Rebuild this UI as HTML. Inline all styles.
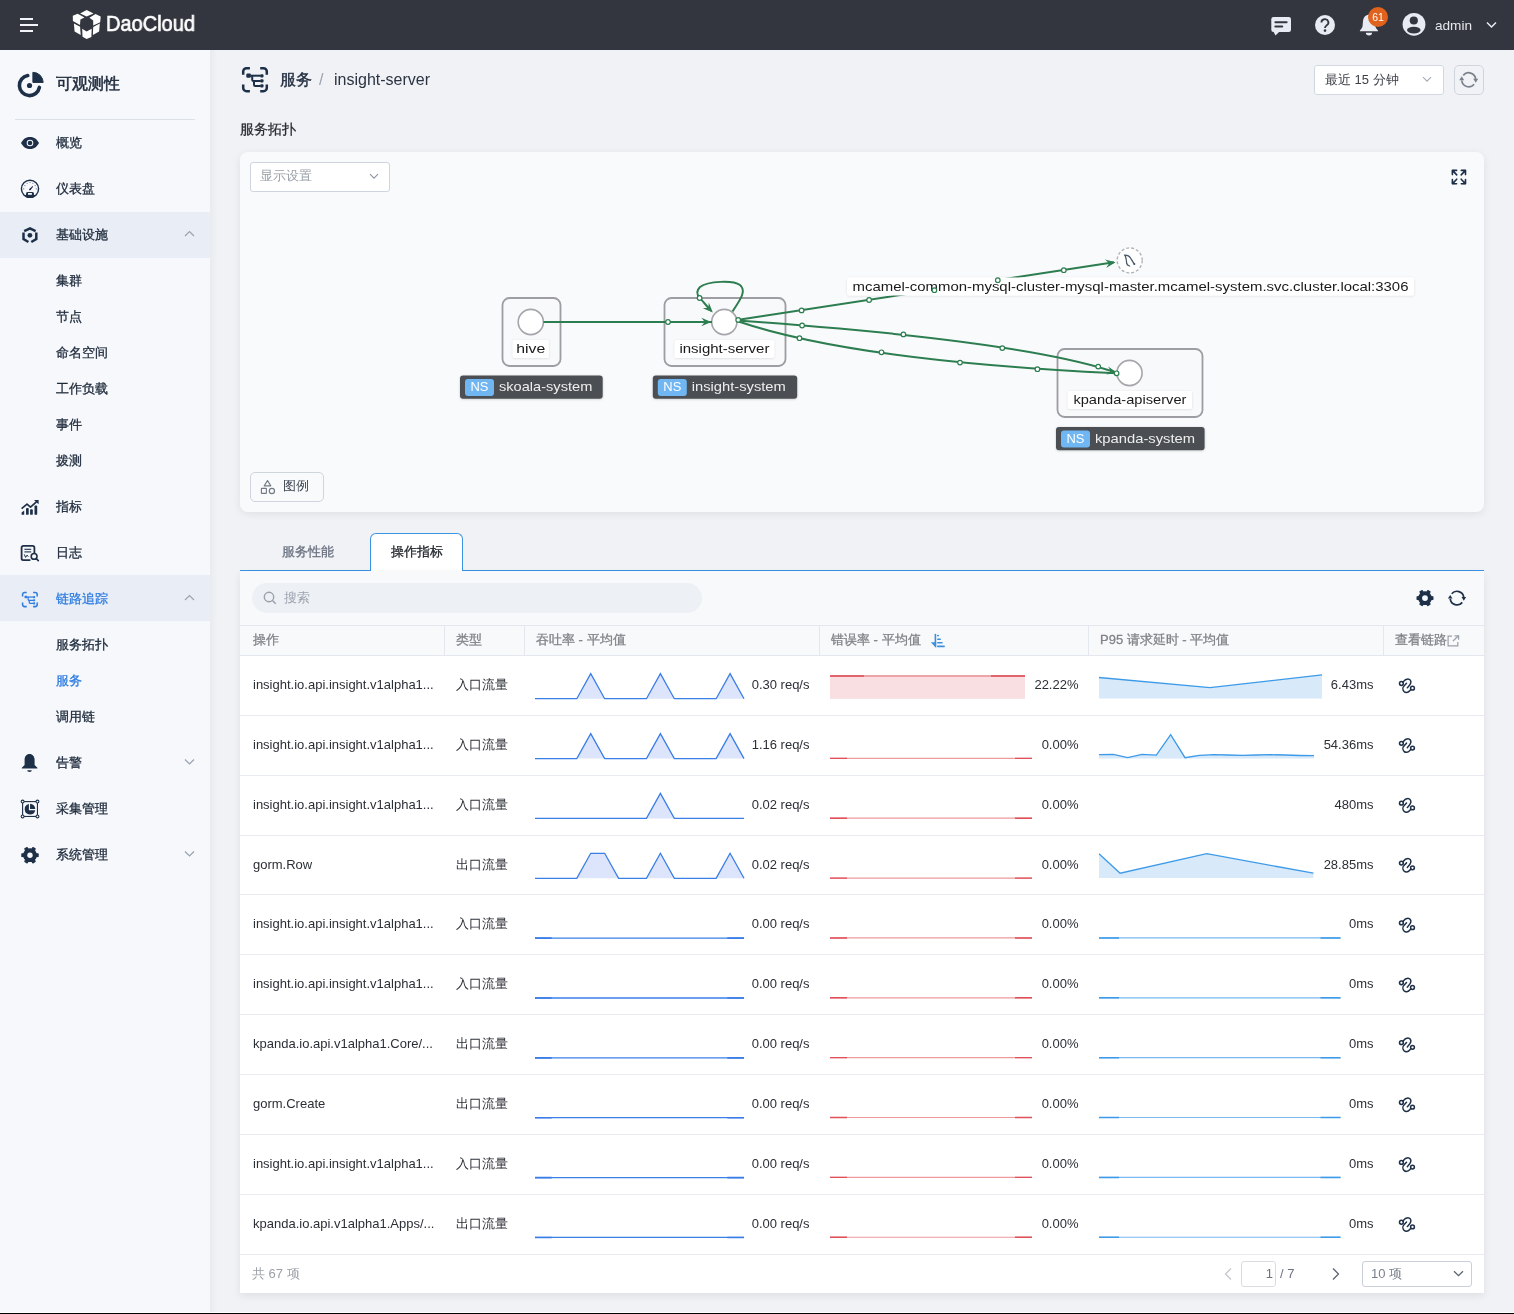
<!DOCTYPE html><html><head><meta charset="utf-8"><style>
*{box-sizing:border-box;margin:0;padding:0}
html,body{width:1514px;height:1314px;overflow:hidden}
body{font-family:"Liberation Sans",sans-serif;background:#f1f2f6;position:relative;color:#1f2937}
.a{position:absolute}
svg{position:absolute;overflow:visible;will-change:transform}
.t{position:absolute;white-space:nowrap;will-change:transform}
#hdr{left:0;top:0;width:1514px;height:50px;background:#33363f}
#side{left:0;top:50px;width:210px;height:1262px;background:#f6f8fc}
#sideshadow{left:210px;top:50px;width:8px;height:1262px;background:linear-gradient(to right,rgba(0,0,0,.03),rgba(0,0,0,0))}
.nav{font-size:13px;color:#1e2a3b;line-height:20px;-webkit-text-stroke:0.3px currentColor}
.med{-webkit-text-stroke:0.3px currentColor}
.hl{position:absolute;left:0;width:210px;height:46px;background:#e9eef6}
.blue{color:#2f7de1}
.card{position:absolute;background:#f9fafc;border-radius:8px;box-shadow:0 2px 9px rgba(0,0,0,.08)}
.row{position:absolute;left:240px;width:1244px;background:#fff;border-bottom:1px solid #e6e9ef}
.op{font-size:13px;color:#2b2f36}
</style></head><body>
<div id="hdr" class="a"></div>
<svg style="left:0;top:0" width="60" height="50"><g stroke="#f2f4f7" stroke-width="2"><line x1="20" y1="19" x2="33" y2="19"/><line x1="20" y1="25" x2="38" y2="25"/><line x1="20" y1="31" x2="33" y2="31"/></g></svg>
<svg style="left:0;top:0" width="110" height="50"><g fill="#fff"><polygon points="86.6,10 93.5,13.5 86.6,16.6 80.1,13.4"/><polygon points="72.8,15.8 77.7,13.8 84.5,17.4 80.4,19.6 80,25.1 72.9,21"/><polygon points="89.4,17.7 95.5,14.1 100.7,16.4 100.2,22.2 93.2,25.4 93.2,20.5"/><polygon points="73.9,23.6 80.1,26.8 80.7,34.9 74.6,31.4"/><polygon points="93.2,27.1 99.8,23.4 99.1,31.4 92.9,34.9"/><polygon points="82.2,28.8 86.6,31.4 91.7,28.8 91.4,37 86.6,39.1 82.5,36.8"/></g></svg>
<div class="t" style="left:105.9px;top:9.4px;font-size:21.5px;color:#fff;line-height:30px;transform-origin:0 0;transform:scaleX(0.93);-webkit-text-stroke:0.65px #fff">DaoCloud</div>
<svg style="left:0;top:0" width="1514" height="50"><rect x="1271.3" y="17" width="19.7" height="15" rx="2.2" fill="#e8ebf2"/><path d="M1273.4 31.5H1279.6L1275.5 35.6z" fill="#e8ebf2"/><g stroke="#33363f" stroke-width="2.1" stroke-linecap="round"><line x1="1275.4" y1="22.2" x2="1286.6" y2="22.2"/><line x1="1275.4" y1="26.5" x2="1282.2" y2="26.5"/></g></svg>
<svg style="left:1315px;top:15px" width="20" height="20" viewBox="0 0 20 20"><circle cx="10" cy="10" r="10" fill="#e8ebf2"/><path d="M6.4 7.5a3.5 3.3 0 1 1 5.2 2.9c-1 .6-1.6 1.1-1.6 2.6" stroke="#33363f" stroke-width="1.8" fill="none"/><circle cx="10" cy="15.6" r="1.3" fill="#33363f"/></svg>
<svg style="left:0;top:0" width="1514" height="50"><path d="M1359.8 31.3Q1359.8 30.3 1361 29.2Q1362.3 28 1362.6 26L1363 21Q1363.5 15 1369 14.4Q1374.5 15 1375 21L1375.3 26Q1375.6 28 1376.9 29.2Q1378.1 30.3 1378.1 31.3Z" fill="#e8ebf2"/><path d="M1365.8 32.8H1372.1Q1372 35.5 1369 35.5Q1366 35.5 1365.8 32.8Z" fill="#e8ebf2"/></svg>
<div class="a" style="left:1368px;top:6.5px;width:20px;height:20px;border-radius:10px;background:#e0621c"></div>
<div class="t" style="left:1368.2px;top:7px;width:20px;text-align:center;font-size:10.5px;line-height:20px;color:#fff">61</div>
<svg style="left:0;top:0" width="1514" height="50"><circle cx="1414" cy="24.3" r="11.4" fill="#e8ebf2"/><circle cx="1413.8" cy="20.5" r="4.1" fill="#33363f"/><ellipse cx="1413.8" cy="30.1" rx="6.8" ry="3.3" fill="#33363f"/></svg>
<div class="t" style="left:1434.5px;top:15.5px;font-size:13.6px;line-height:20px;color:#e5e7eb">admin</div>
<svg style="left:1486px;top:21px" width="11" height="8"><path d="M1 1.5l4.5 4.5l4.5-4.5" stroke="#e8ebf2" stroke-width="1.5" fill="none"/></svg>
<div id="side" class="a"></div><div id="sideshadow" class="a"></div>
<div class="a" style="left:15px;top:119px;width:180px;height:1px;background:#dde1e8"></div>
<svg style="left:0;top:0" width="210" height="120"><path d="M27.75 75.55A10.1 10.1 0 1 0 39.41 87.43" fill="none" stroke="#1e3048" stroke-width="3.6" stroke-linecap="round"/><path d="M32.9 82.4V72.3A10.4 10.4 0 0 1 43.2 82.4Z" fill="#1e3048" stroke="#1e3048" stroke-width="1" stroke-linejoin="round"/><circle cx="29.5" cy="85.5" r="2.6" fill="#1e3048"/></svg>
<div class="t" style="left:56px;top:73px;font-size:16px;color:#1e2a3b;line-height:22px;-webkit-text-stroke:0.5px #1e2a3b">可观测性</div>
<div class="hl" style="top:212px"></div>
<div class="hl" style="top:575px"></div>
<div class="t nav" style="left:56px;top:133px">概览</div>
<div class="t nav" style="left:56px;top:179px">仪表盘</div>
<div class="t nav" style="left:56px;top:225px">基础设施</div>
<div class="t nav" style="left:56px;top:497px">指标</div>
<div class="t nav" style="left:56px;top:543px">日志</div>
<div class="t nav blue" style="left:56px;top:589px">链路追踪</div>
<div class="t nav" style="left:56px;top:753px">告警</div>
<div class="t nav" style="left:56px;top:799px">采集管理</div>
<div class="t nav" style="left:56px;top:845px">系统管理</div>
<div class="t nav" style="left:56px;top:271px">集群</div>
<div class="t nav" style="left:56px;top:307px">节点</div>
<div class="t nav" style="left:56px;top:343px">命名空间</div>
<div class="t nav" style="left:56px;top:379px">工作负载</div>
<div class="t nav" style="left:56px;top:415px">事件</div>
<div class="t nav" style="left:56px;top:451px">拨测</div>
<div class="t nav" style="left:56px;top:635px">服务拓扑</div>
<div class="t nav blue" style="left:56px;top:671px">服务</div>
<div class="t nav" style="left:56px;top:707px">调用链</div>
<svg style="left:184px;top:230px" width="11" height="8"><path d="M1 6l4.5-4.5l4.5 4.5" stroke="#9aa3b0" stroke-width="1.2" fill="none"/></svg>
<svg style="left:184px;top:594px" width="11" height="8"><path d="M1 6l4.5-4.5l4.5 4.5" stroke="#9aa3b0" stroke-width="1.2" fill="none"/></svg>
<svg style="left:184px;top:758px" width="11" height="8"><path d="M1 1.5l4.5 4.5l4.5-4.5" stroke="#9aa3b0" stroke-width="1.2" fill="none"/></svg>
<svg style="left:184px;top:850px" width="11" height="8"><path d="M1 1.5l4.5 4.5l4.5-4.5" stroke="#9aa3b0" stroke-width="1.2" fill="none"/></svg>
<svg style="left:20px;top:136px" width="20" height="14" viewBox="0 0 20 14"><path d="M1 7C3.5 2.5 6.5 1 10 1s6.5 1.5 9 6c-2.5 4.5-5.5 6-9 6S3.5 11.5 1 7z" fill="#1e3048"/><circle cx="10" cy="7" r="3.3" fill="#f6f8fc"/><circle cx="10" cy="7" r="2.3" fill="#1e3048"/></svg>
<svg style="left:0;top:0" width="210" height="210"><circle cx="30" cy="188.8" r="8.6" fill="none" stroke="#1e3048" stroke-width="1.4"/><path d="M23.3 195A9 9 0 0 0 36.7 195Z" fill="#1e3048"/><path d="M26 195.2V193.6a1.6 1.6 0 0 1 1.6-1.6h4.8a1.6 1.6 0 0 1 1.6 1.6V195.2z" fill="#1e3048"/><rect x="28" y="193" width="3.9" height="1.8" fill="#f6f8fc"/><path d="M29.6 189.8L32.8 186.3" stroke="#1e3048" stroke-width="1.1"/><path d="M29 189.6l1.8-1.8l0.9 0.9l-1.8 1.8z" fill="#1e3048"/><g fill="#1e3048" opacity="0.7"><circle cx="23.7" cy="188.8" r=".6"/><circle cx="36.3" cy="188.8" r=".6"/><circle cx="24.9" cy="185.6" r=".55"/><circle cx="35.1" cy="185.6" r=".55"/><circle cx="27.1" cy="183.3" r=".55"/><circle cx="32.9" cy="183.3" r=".55"/><circle cx="30" cy="182.5" r=".55"/></g></svg>
<svg style="left:0;top:0" width="210" height="260"><g fill="none" stroke="#1e3048" stroke-width="2.5"><path d="M24.2 231.2L30 228.4L35.6 231.2"/><path d="M23.5 232.6V239L28.4 242"/><path d="M36.3 232.6V239L31.3 242"/></g><circle cx="29.9" cy="235.3" r="2.4" fill="#1e3048"/></svg>
<svg style="left:0;top:0" width="210" height="600"><g fill="#1e3048"><path d="M21.6 514.8V512.6l2.6-2.2V514.8z"/><rect x="26" y="508" width="2.7" height="6.8" rx=".9"/><rect x="30.1" y="509.3" width="2.7" height="5.5" rx=".9"/><rect x="34.5" y="505.6" width="2.7" height="9.2" rx=".9"/></g><path d="M21.6 508.6L27 504.2L30.5 507.2L37 501.4" stroke="#1e3048" stroke-width="1.7" fill="none" stroke-linejoin="round"/><path d="M34 499.9H38.6V504.3z" fill="#1e3048"/></svg>
<svg style="left:0;top:0" width="210" height="600"><path d="M30.4 560.2H23.2a1.6 1.6 0 0 1-1.6-1.6V547.4a1.6 1.6 0 0 1 1.6-1.6h9.6a1.6 1.6 0 0 1 1.6 1.6V553.4" fill="none" stroke="#1e3048" stroke-width="1.8"/><g stroke="#1e3048" stroke-width="1.1"><line x1="24.4" y1="549.3" x2="31.2" y2="549.3"/><line x1="24.4" y1="551.9" x2="31.2" y2="551.9"/></g><path d="M24.3 554.4l1.3 3l1.5-2.3l1.2 1.6" stroke="#1e3048" stroke-width="1" fill="none"/><circle cx="34.1" cy="556.4" r="2.9" fill="none" stroke="#1e3048" stroke-width="1.6"/><line x1="36.2" y1="558.5" x2="38.3" y2="560.6" stroke="#1e3048" stroke-width="1.7" stroke-linecap="round"/></svg>
<svg style="left:0;top:0" width="1514" height="1314"><g transform="translate(21.9,591.1) scale(0.6192)"><g fill="none" stroke="#2f7de1" stroke-width="2.5"><path d="M1.1 8.6V5.4a3.3 3.3 0 0 1 3.3-3.3H7.8"/><path d="M18.1 2.1H21.4a3.3 3.3 0 0 1 3.3 3.3V8.6"/><path d="M1.1 18.4V21.8a3.3 3.3 0 0 0 3.3 3.3H7.8"/><path d="M24.7 18.4V21.8a3.3 3.3 0 0 1-3.3 3.3H18.1"/></g><g fill="#2f7de1"><rect x="4.2" y="7.5" width="4.6" height="4.2" rx="1.2"/><rect x="18.1" y="8.1" width="3.3" height="3.3" rx="1"/><rect x="18.1" y="13.1" width="3.3" height="3.4" rx="1"/><rect x="18.1" y="18.2" width="3.3" height="3.3" rx="1"/></g><g fill="none" stroke="#2f7de1" stroke-width="2"><path d="M8.6 9.6H18.5"/><path d="M10.1 9.6V13.6a1.2 1.2 0 0 0 1.2 1.2H18.5"/><path d="M11.9 14.8V18.6a1.2 1.2 0 0 0 1.2 1.2H18.5"/></g></g></svg>
<svg style="left:21px;top:753px" width="18" height="20" viewBox="0 0 18 20"><path d="M8.5 1C5.4 1 3.6 3.5 3.6 6.6v5.3L0.8 14.8v.8h15.6v-.8l-2.8-2.9V6.6C13.6 3.5 11.6 1 8.5 1z" fill="#1e3048"/><path d="M6.2 17.2a2.3 1.8 0 0 0 4.6 0z" fill="#1e3048"/></svg>
<svg style="left:0;top:0" width="210" height="900"><rect x="22.6" y="801.6" width="14.85" height="14.85" fill="none" stroke="#1e3048" stroke-width="1.1"/><g fill="#f6f8fc" stroke="#1e3048" stroke-width="1.1"><circle cx="22.6" cy="801.6" r="1.45"/><circle cx="37.45" cy="801.6" r="1.45"/><circle cx="22.6" cy="816.45" r="1.45"/><circle cx="37.45" cy="816.45" r="1.45"/></g><path d="M28.9 804.02A5.3 5.3 0 1 0 35.2 810.2H28.9Z" fill="#1e3048"/><path d="M30.05 808.9V803.7A5.2 5.2 0 0 1 35.25 808.9Z" fill="#1e3048"/></svg>
<svg style="left:0;top:0" width="1514" height="1314"><polygon points="35.46,852.05 36.11,853.68 38.10,853.92 38.10,856.48 36.11,856.72 35.46,858.35 34.38,859.73 35.16,861.57 32.94,862.86 31.74,861.26 30.00,861.50 28.26,861.26 27.06,862.86 24.84,861.57 25.62,859.73 24.54,858.35 23.89,856.72 21.90,856.48 21.90,853.92 23.89,853.68 24.54,852.05 25.62,850.67 24.84,848.83 27.06,847.54 28.26,849.14 30.00,848.90 31.74,849.14 32.94,847.54 35.16,848.83 34.38,850.67" fill="#1e3048" stroke="#1e3048" stroke-width="1.2" stroke-linejoin="round"/><circle cx="30" cy="855.2" r="2.7" fill="#f6f8fc"/></svg>
<svg style="left:0;top:0" width="1514" height="1314"><g transform="translate(242.1,66.1) scale(1.0000)"><g fill="none" stroke="#1e3048" stroke-width="2.5"><path d="M1.1 8.6V5.4a3.3 3.3 0 0 1 3.3-3.3H7.8"/><path d="M18.1 2.1H21.4a3.3 3.3 0 0 1 3.3 3.3V8.6"/><path d="M1.1 18.4V21.8a3.3 3.3 0 0 0 3.3 3.3H7.8"/><path d="M24.7 18.4V21.8a3.3 3.3 0 0 1-3.3 3.3H18.1"/></g><g fill="#1e3048"><rect x="4.2" y="7.5" width="4.6" height="4.2" rx="1.2"/><rect x="18.1" y="8.1" width="3.3" height="3.3" rx="1"/><rect x="18.1" y="13.1" width="3.3" height="3.4" rx="1"/><rect x="18.1" y="18.2" width="3.3" height="3.3" rx="1"/></g><g fill="none" stroke="#1e3048" stroke-width="2"><path d="M8.6 9.6H18.5"/><path d="M10.1 9.6V13.6a1.2 1.2 0 0 0 1.2 1.2H18.5"/><path d="M11.9 14.8V18.6a1.2 1.2 0 0 0 1.2 1.2H18.5"/></g></g></svg>
<div class="t" style="left:280px;top:69px;font-size:16px;color:#1e2a3b;line-height:22px;-webkit-text-stroke:0.35px #1e2a3b">服务</div>
<div class="t" style="left:319px;top:69px;font-size:16px;color:#9ca3af;line-height:22px">/</div>
<div class="t" style="left:334px;top:69px;font-size:16px;color:#2a3443;line-height:22px">insight-server</div>
<div class="a" style="left:1314px;top:65px;width:130px;height:30px;background:#fff;border:1px solid #d3d8e0;border-radius:3px"></div>
<div class="t" style="left:1325px;top:70px;font-size:13px;color:#3b3f46;line-height:20px">最近 15 分钟</div>
<svg style="left:1422px;top:76px" width="10" height="7"><path d="M1 1.2l4 4l4-4" stroke="#a3aab5" stroke-width="1.1" fill="none"/></svg>
<div class="a" style="left:1454px;top:65px;width:30px;height:30px;border:1px solid #d0d5dd;border-radius:5px;background:#f0f2f5"></div>
<svg style="left:0;top:0" width="1514" height="1314"><g fill="none" stroke="#7b828d" stroke-width="1.7"><path d="M1463.26 75.39A7 7 0 0 1 1475.66 79.07"/><path d="M1474.14 84.21A7 7 0 0 1 1461.74 80.53"/></g><path d="M1473.20 78.80H1478.20L1475.70 82.80z" fill="#7b828d"/><path d="M1459.20 80.30H1464.20L1461.70 76.30z" fill="#7b828d"/></svg>
<div class="t" style="left:240px;top:119px;font-size:14px;color:#2b2f36;line-height:20px;-webkit-text-stroke:0.3px #2b2f36">服务拓扑</div>
<div class="card" style="left:240px;top:152px;width:1244px;height:360px"></div>
<div class="a" style="left:250px;top:162px;width:140px;height:30px;background:#fff;border:1px solid #cfd5de;border-radius:3px"></div>
<div class="t" style="left:260px;top:166px;font-size:13px;color:#9aa0a8;line-height:20px">显示设置</div>
<svg style="left:369px;top:173px" width="10" height="7"><path d="M1 1.2l4 4l4-4" stroke="#8d95a1" stroke-width="1.1" fill="none"/></svg>
<svg style="left:0;top:0" width="1514" height="300"><path d="M1452.4 174.6V170.4H1456.6000000000001" fill="none" stroke="#1e3048" stroke-width="1.6" stroke-linecap="round" stroke-linejoin="round"/><path d="M1452.4 170.4L1455.0 170.4L1452.4 173.0Z" fill="#1e3048" stroke="#1e3048" stroke-width="1" stroke-linejoin="round"/><path d="M1453.4 171.4L1456.7 174.9" stroke="#1e3048" stroke-width="1.6" stroke-linecap="round"/><path d="M1465.5 174.6V170.4H1461.3" fill="none" stroke="#1e3048" stroke-width="1.6" stroke-linecap="round" stroke-linejoin="round"/><path d="M1465.5 170.4L1462.9 170.4L1465.5 173.0Z" fill="#1e3048" stroke="#1e3048" stroke-width="1" stroke-linejoin="round"/><path d="M1464.5 171.4L1461.2 174.9" stroke="#1e3048" stroke-width="1.6" stroke-linecap="round"/><path d="M1452.4 179.5V183.7H1456.6000000000001" fill="none" stroke="#1e3048" stroke-width="1.6" stroke-linecap="round" stroke-linejoin="round"/><path d="M1452.4 183.7L1455.0 183.7L1452.4 181.1Z" fill="#1e3048" stroke="#1e3048" stroke-width="1" stroke-linejoin="round"/><path d="M1453.4 182.7L1456.7 179.2" stroke="#1e3048" stroke-width="1.6" stroke-linecap="round"/><path d="M1465.5 179.5V183.7H1461.3" fill="none" stroke="#1e3048" stroke-width="1.6" stroke-linecap="round" stroke-linejoin="round"/><path d="M1465.5 183.7L1462.9 183.7L1465.5 181.1Z" fill="#1e3048" stroke="#1e3048" stroke-width="1" stroke-linejoin="round"/><path d="M1464.5 182.7L1461.2 179.2" stroke="#1e3048" stroke-width="1.6" stroke-linecap="round"/></svg>
<div class="a" style="left:250px;top:472px;width:74px;height:30px;border:1px solid #cfd5de;border-radius:5px"></div>
<svg style="left:0;top:0" width="400" height="520"><g fill="none" stroke="#737a84" stroke-width="1.15"><path d="M267.5 480.6L270.8 485.8H264.2z" stroke-linejoin="round"/><rect x="261.4" y="488.4" width="5" height="5" rx=".6"/><circle cx="271.9" cy="491" r="2.6"/></g></svg>
<div class="t" style="left:283px;top:476px;font-size:13px;color:#3b4350;line-height:20px">图例</div>
<svg style="left:0;top:0" width="1514" height="1314"><defs><filter id="sh" x="-10%" y="-50%" width="120%" height="200%"><feDropShadow dx="0" dy="0.5" stdDeviation="0.8" flood-color="#000" flood-opacity="0.12"/></filter><filter id="sh2" x="-10%" y="-50%" width="120%" height="200%"><feDropShadow dx="0" dy="0.5" stdDeviation="1" flood-color="#000" flood-opacity="0.2"/></filter></defs><rect x="502.5" y="298" width="58" height="68" rx="7" fill="#f8f9fa" stroke="#9d9da3" stroke-width="1.8"/><rect x="664.5" y="298" width="121" height="68" rx="7" fill="#f8f9fa" stroke="#9d9da3" stroke-width="1.8"/><rect x="1057.5" y="349" width="145" height="68" rx="7" fill="#f8f9fa" stroke="#9d9da3" stroke-width="1.8"/><circle cx="530.8" cy="322" r="12.6" fill="#fff" stroke="#a5a5ab" stroke-width="1.6"/><circle cx="724.3" cy="322" r="12.6" fill="#fff" stroke="#a5a5ab" stroke-width="1.6"/><circle cx="1129.5" cy="373" r="12.6" fill="#fff" stroke="#a5a5ab" stroke-width="1.6"/><circle cx="1129.7" cy="260.4" r="12.5" fill="#fff" stroke="#b0b3b8" stroke-width="1.4" stroke-dasharray="3 2"/><path d="M1124.5 255.2C1126.5 255 1129 255.5 1130.5 258C1132 260.5 1133 262.5 1134.5 264.2M1125.3 256C1126.2 258.5 1126.6 261 1126.7 263.5C1127 265 1128 265.5 1129.6 266" stroke="#4b5a6a" stroke-width="1.3" fill="none" stroke-linecap="round"/><circle cx="1134.3" cy="263.9" r="1" fill="#4b5a6a"/><path d="M543.4 322H712" stroke="#2c7d4f" stroke-width="2" fill="none"/><path d="M711.3 322.0L701.3 326.2L704.8 322.0L701.3 317.8z" fill="#2c7d4f"/><circle cx="668" cy="322" r="2.3" fill="#fff" stroke="#2c7d4f" stroke-width="1.2"/><path d="M732.5 311.5C740 300 747 291 740 285C733 280 708 281 700 287C696 291 697 295 700 298C704 303 707 306 711 311" stroke="#2c7d4f" stroke-width="2" fill="none"/><path d="M712.8 312.5L702.8 308.3L708.3 307.8L708.8 302.4z" fill="#2c7d4f"/><circle cx="699.6" cy="298" r="2.3" fill="#fff" stroke="#2c7d4f" stroke-width="1.2"/><path d="M737 320L1114 262.3" stroke="#2c7d4f" stroke-width="2" fill="none"/><path d="M1115.5 262.2L1106.2 267.9L1109.1 263.2L1105.0 259.6z" fill="#2c7d4f"/><rect x="847" y="277.6" width="567" height="18" rx="2" fill="#fff" filter="url(#sh)"/><text x="852.5" y="290.7" font-family="Liberation Sans" font-size="13.4" fill="#1a1a1a" textLength="556" lengthAdjust="spacingAndGlyphs">mcamel-common-mysql-cluster-mysql-master.mcamel-system.svc.cluster.local:3306</text><circle cx="801.6" cy="310.4" r="2.3" fill="#fff" stroke="#2c7d4f" stroke-width="1.2"/><circle cx="869.1" cy="300" r="2.3" fill="#fff" stroke="#2c7d4f" stroke-width="1.2"/><circle cx="934.4" cy="290.2" r="2.3" fill="#fff" stroke="#2c7d4f" stroke-width="1.2"/><circle cx="997.8" cy="280.2" r="2.3" fill="#fff" stroke="#2c7d4f" stroke-width="1.2"/><circle cx="1063.8" cy="270.2" r="2.3" fill="#fff" stroke="#2c7d4f" stroke-width="1.2"/><path d="M737 320.5Q1024 340.5 1117 372.8" stroke="#2c7d4f" stroke-width="2" fill="none"/><path d="M737 321Q854 361 1117 373.3" stroke="#2c7d4f" stroke-width="2" fill="none"/><path d="M1117.0 372.8L1106.3 374.6L1110.7 371.3L1108.2 366.4z" fill="#2c7d4f"/><circle cx="738.2" cy="319.9" r="2.3" fill="#fff" stroke="#2c7d4f" stroke-width="1.2"/><circle cx="802.1" cy="325.5" r="2.3" fill="#fff" stroke="#2c7d4f" stroke-width="1.2"/><circle cx="903.4" cy="334.4" r="2.3" fill="#fff" stroke="#2c7d4f" stroke-width="1.2"/><circle cx="1002.3" cy="348.1" r="2.3" fill="#fff" stroke="#2c7d4f" stroke-width="1.2"/><circle cx="1098.2" cy="366.6" r="2.3" fill="#fff" stroke="#2c7d4f" stroke-width="1.2"/><circle cx="799.5" cy="338.2" r="2.3" fill="#fff" stroke="#2c7d4f" stroke-width="1.2"/><circle cx="881.5" cy="352.3" r="2.3" fill="#fff" stroke="#2c7d4f" stroke-width="1.2"/><circle cx="960" cy="362.6" r="2.3" fill="#fff" stroke="#2c7d4f" stroke-width="1.2"/><circle cx="1037.4" cy="369.2" r="2.3" fill="#fff" stroke="#2c7d4f" stroke-width="1.2"/><circle cx="1116.6" cy="373.3" r="2.3" fill="#fff" stroke="#2c7d4f" stroke-width="1.2"/><rect x="512.7" y="340" width="36.2" height="18" rx="2" fill="#fff" filter="url(#sh)"/><text x="530.8000000000001" y="353.3" text-anchor="middle" font-family="Liberation Sans" font-size="13.4" fill="#1a1a1a" textLength="29" lengthAdjust="spacingAndGlyphs">hive</text><rect x="674.6" y="340" width="99.6" height="18" rx="2" fill="#fff" filter="url(#sh)"/><text x="724.4" y="353.3" text-anchor="middle" font-family="Liberation Sans" font-size="13.4" fill="#1a1a1a" textLength="90" lengthAdjust="spacingAndGlyphs">insight-server</text><rect x="1067.8" y="391" width="124.2" height="18" rx="2" fill="#fff" filter="url(#sh)"/><text x="1129.8999999999999" y="404.3" text-anchor="middle" font-family="Liberation Sans" font-size="13.4" fill="#1a1a1a" textLength="113" lengthAdjust="spacingAndGlyphs">kpanda-apiserver</text><rect x="460" y="375.5" width="142.7" height="23.3" rx="3" fill="#4b4f53" filter="url(#sh2)"/><rect x="465" y="378.9" width="29" height="17" rx="3" fill="#70b6f2"/><text x="479.5" y="391.4" text-anchor="middle" font-family="Liberation Sans" font-size="13.4" fill="#fff" textLength="18" lengthAdjust="spacingAndGlyphs">NS</text><text x="499" y="391.1" font-family="Liberation Sans" font-size="13.4" fill="#eeeeee" textLength="93.3" lengthAdjust="spacingAndGlyphs">skoala-system</text><rect x="652.8" y="375.5" width="144.4" height="23.3" rx="3" fill="#4b4f53" filter="url(#sh2)"/><rect x="657.8" y="378.9" width="29" height="17" rx="3" fill="#70b6f2"/><text x="672.3" y="391.4" text-anchor="middle" font-family="Liberation Sans" font-size="13.4" fill="#fff" textLength="18" lengthAdjust="spacingAndGlyphs">NS</text><text x="691.8" y="391.1" font-family="Liberation Sans" font-size="13.4" fill="#eeeeee" textLength="94" lengthAdjust="spacingAndGlyphs">insight-system</text><rect x="1056" y="427" width="148.6" height="23.3" rx="3" fill="#4b4f53" filter="url(#sh2)"/><rect x="1061" y="430.4" width="29" height="17" rx="3" fill="#70b6f2"/><text x="1075.5" y="442.9" text-anchor="middle" font-family="Liberation Sans" font-size="13.4" fill="#fff" textLength="18" lengthAdjust="spacingAndGlyphs">NS</text><text x="1095" y="442.6" font-family="Liberation Sans" font-size="13.4" fill="#eeeeee" textLength="100" lengthAdjust="spacingAndGlyphs">kpanda-system</text></svg>
<div class="a" style="left:240px;top:570px;width:1244px;height:1px;background:#3b93e4"></div>
<div class="a" style="left:369.5px;top:533px;width:93px;height:38px;background:#fff;border:1px solid #3b93e4;border-bottom:none;border-radius:6px 6px 0 0"></div>
<div class="t" style="left:281.5px;top:542px;font-size:13px;color:#6b7280;line-height:20px;-webkit-text-stroke:0.3px #6b7280">服务性能</div>
<div class="t" style="left:390.5px;top:542px;font-size:13px;color:#1f2328;line-height:20px;-webkit-text-stroke:0.3px #1f2328">操作指标</div>
<div class="a" style="left:240px;top:571px;width:1244px;height:722px;background:#fff;box-shadow:0 3px 8px rgba(0,0,0,.08)"></div>
<div class="a" style="left:240px;top:571px;width:1244px;height:84px;background:#f8f9fb"></div>
<div class="a" style="left:252px;top:583px;width:450px;height:30px;border-radius:15px;background:#edf0f4"></div>
<svg style="left:263px;top:591px" width="14" height="14" viewBox="0 0 14 14"><circle cx="6" cy="6" r="4.7" fill="none" stroke="#9aa1ab" stroke-width="1.4"/><path d="M9.5 9.5l3.2 3.2" stroke="#9aa1ab" stroke-width="1.5"/></svg>
<div class="t" style="left:283.5px;top:588px;font-size:13px;color:#9ca3af;line-height:20px">搜索</div>
<svg style="left:0;top:0" width="1514" height="1314"><polygon points="1430.37,595.00 1431.02,596.60 1432.90,596.85 1432.90,599.35 1431.02,599.60 1430.37,601.20 1429.31,602.56 1430.03,604.32 1427.87,605.57 1426.71,604.06 1425.00,604.30 1423.29,604.06 1422.13,605.57 1419.97,604.32 1420.69,602.56 1419.63,601.20 1418.98,599.60 1417.10,599.35 1417.10,596.85 1418.98,596.60 1419.63,595.00 1420.69,593.64 1419.97,591.88 1422.13,590.63 1423.29,592.14 1425.00,591.90 1426.71,592.14 1427.87,590.63 1430.03,591.88 1429.31,593.64" fill="#1e3048" stroke="#1e3048" stroke-width="1.2" stroke-linejoin="round"/><circle cx="1425" cy="598.1" r="2.9" fill="#f8f9fb"/></svg>
<svg style="left:0;top:0" width="1514" height="1314"><g fill="none" stroke="#1e3048" stroke-width="1.7"><path d="M1451.72 593.82A6.8 6.8 0 0 1 1463.76 597.39"/><path d="M1462.28 602.38A6.8 6.8 0 0 1 1450.24 598.81"/></g><path d="M1461.50 597.10H1466.10L1463.80 600.80z" fill="#1e3048"/><path d="M1447.90 598.60H1452.50L1450.20 594.90z" fill="#1e3048"/></svg>
<div class="a" style="left:240px;top:625px;width:1244px;height:1px;background:#e3e7ee"></div>
<div class="a" style="left:240px;top:655px;width:1244px;height:1px;background:#e3e7ee"></div>
<div class="a" style="left:444px;top:626px;width:1px;height:29px;background:#e3e7ee"></div>
<div class="a" style="left:524px;top:626px;width:1px;height:29px;background:#e3e7ee"></div>
<div class="a" style="left:819px;top:626px;width:1px;height:29px;background:#e3e7ee"></div>
<div class="a" style="left:1088px;top:626px;width:1px;height:29px;background:#e3e7ee"></div>
<div class="a" style="left:1383px;top:626px;width:1px;height:29px;background:#e3e7ee"></div>
<div class="t" style="left:252.5px;top:630px;font-size:13px;color:#808388;line-height:20px;-webkit-text-stroke:0.3px #808388">操作</div>
<div class="t" style="left:455.5px;top:630px;font-size:13px;color:#808388;line-height:20px;-webkit-text-stroke:0.3px #808388">类型</div>
<div class="t" style="left:535.5px;top:630px;font-size:13px;color:#808388;line-height:20px;-webkit-text-stroke:0.3px #808388">吞吐率 - 平均值</div>
<div class="t" style="left:830.5px;top:630px;font-size:13px;color:#808388;line-height:20px;-webkit-text-stroke:0.3px #808388">错误率 - 平均值</div>
<div class="t" style="left:1099.5px;top:630px;font-size:13px;color:#808388;line-height:20px;-webkit-text-stroke:0.3px #808388">P95 请求延时 - 平均值</div>
<div class="t" style="left:1394.5px;top:630px;font-size:13px;color:#808388;line-height:20px;-webkit-text-stroke:0.3px #808388">查看链路</div>
<svg style="left:0;top:0" width="1514" height="700"><g fill="#3a90de"><rect x="934.6" y="633.8" width="1.6" height="13" rx=".7"/><path d="M930.8 642.3H936.2V647.9z"/><rect x="937" y="634.8" width="2" height="1.6" rx=".8"/><rect x="937" y="638.5" width="4" height="1.6" rx=".8"/><rect x="937" y="641.9" width="5.8" height="1.6" rx=".8"/><rect x="937" y="645.6" width="7.9" height="1.6" rx=".8"/></g></svg>
<svg style="left:1447px;top:635px" width="13" height="12" viewBox="0 0 13 12"><g fill="none" stroke="#9aa0a8" stroke-width="1.2"><path d="M5 1.2H1.1v9.7h9.7V7"/><path d="M6 6l5.5-5.2"/><path d="M7.6 0.8h4v4"/></g></svg>
<div class="a" style="left:240px;top:714.86px;width:1244px;height:1px;background:#e8ebf0"></div>
<div class="t op" style="left:252.5px;top:675.00px;line-height:20px">insight.io.api.insight.v1alpha1...</div>
<div class="t op" style="left:455.5px;top:675.00px;line-height:20px">入口流量</div>
<div class="t op" style="left:700px;width:109.5px;text-align:right;top:675.00px;line-height:20px">0.30 req/s</div>
<div class="t op" style="left:980px;width:98.5px;text-align:right;top:675.00px;line-height:20px">22.22%</div>
<div class="t op" style="left:1270px;width:103.5px;text-align:right;top:675.00px;line-height:20px">6.43ms</div>
<div class="a" style="left:240px;top:774.72px;width:1244px;height:1px;background:#e8ebf0"></div>
<div class="t op" style="left:252.5px;top:734.86px;line-height:20px">insight.io.api.insight.v1alpha1...</div>
<div class="t op" style="left:455.5px;top:734.86px;line-height:20px">入口流量</div>
<div class="t op" style="left:700px;width:109.5px;text-align:right;top:734.86px;line-height:20px">1.16 req/s</div>
<div class="t op" style="left:980px;width:98.5px;text-align:right;top:734.86px;line-height:20px">0.00%</div>
<div class="t op" style="left:1270px;width:103.5px;text-align:right;top:734.86px;line-height:20px">54.36ms</div>
<div class="a" style="left:240px;top:834.58px;width:1244px;height:1px;background:#e8ebf0"></div>
<div class="t op" style="left:252.5px;top:794.72px;line-height:20px">insight.io.api.insight.v1alpha1...</div>
<div class="t op" style="left:455.5px;top:794.72px;line-height:20px">入口流量</div>
<div class="t op" style="left:700px;width:109.5px;text-align:right;top:794.72px;line-height:20px">0.02 req/s</div>
<div class="t op" style="left:980px;width:98.5px;text-align:right;top:794.72px;line-height:20px">0.00%</div>
<div class="t op" style="left:1270px;width:103.5px;text-align:right;top:794.72px;line-height:20px">480ms</div>
<div class="a" style="left:240px;top:894.44px;width:1244px;height:1px;background:#e8ebf0"></div>
<div class="t op" style="left:252.5px;top:854.58px;line-height:20px">gorm.Row</div>
<div class="t op" style="left:455.5px;top:854.58px;line-height:20px">出口流量</div>
<div class="t op" style="left:700px;width:109.5px;text-align:right;top:854.58px;line-height:20px">0.02 req/s</div>
<div class="t op" style="left:980px;width:98.5px;text-align:right;top:854.58px;line-height:20px">0.00%</div>
<div class="t op" style="left:1270px;width:103.5px;text-align:right;top:854.58px;line-height:20px">28.85ms</div>
<div class="a" style="left:240px;top:954.30px;width:1244px;height:1px;background:#e8ebf0"></div>
<div class="t op" style="left:252.5px;top:914.44px;line-height:20px">insight.io.api.insight.v1alpha1...</div>
<div class="t op" style="left:455.5px;top:914.44px;line-height:20px">入口流量</div>
<div class="t op" style="left:700px;width:109.5px;text-align:right;top:914.44px;line-height:20px">0.00 req/s</div>
<div class="t op" style="left:980px;width:98.5px;text-align:right;top:914.44px;line-height:20px">0.00%</div>
<div class="t op" style="left:1270px;width:103.5px;text-align:right;top:914.44px;line-height:20px">0ms</div>
<div class="a" style="left:240px;top:1014.16px;width:1244px;height:1px;background:#e8ebf0"></div>
<div class="t op" style="left:252.5px;top:974.30px;line-height:20px">insight.io.api.insight.v1alpha1...</div>
<div class="t op" style="left:455.5px;top:974.30px;line-height:20px">入口流量</div>
<div class="t op" style="left:700px;width:109.5px;text-align:right;top:974.30px;line-height:20px">0.00 req/s</div>
<div class="t op" style="left:980px;width:98.5px;text-align:right;top:974.30px;line-height:20px">0.00%</div>
<div class="t op" style="left:1270px;width:103.5px;text-align:right;top:974.30px;line-height:20px">0ms</div>
<div class="a" style="left:240px;top:1074.02px;width:1244px;height:1px;background:#e8ebf0"></div>
<div class="t op" style="left:252.5px;top:1034.16px;line-height:20px">kpanda.io.api.v1alpha1.Core/...</div>
<div class="t op" style="left:455.5px;top:1034.16px;line-height:20px">出口流量</div>
<div class="t op" style="left:700px;width:109.5px;text-align:right;top:1034.16px;line-height:20px">0.00 req/s</div>
<div class="t op" style="left:980px;width:98.5px;text-align:right;top:1034.16px;line-height:20px">0.00%</div>
<div class="t op" style="left:1270px;width:103.5px;text-align:right;top:1034.16px;line-height:20px">0ms</div>
<div class="a" style="left:240px;top:1133.88px;width:1244px;height:1px;background:#e8ebf0"></div>
<div class="t op" style="left:252.5px;top:1094.02px;line-height:20px">gorm.Create</div>
<div class="t op" style="left:455.5px;top:1094.02px;line-height:20px">出口流量</div>
<div class="t op" style="left:700px;width:109.5px;text-align:right;top:1094.02px;line-height:20px">0.00 req/s</div>
<div class="t op" style="left:980px;width:98.5px;text-align:right;top:1094.02px;line-height:20px">0.00%</div>
<div class="t op" style="left:1270px;width:103.5px;text-align:right;top:1094.02px;line-height:20px">0ms</div>
<div class="a" style="left:240px;top:1193.74px;width:1244px;height:1px;background:#e8ebf0"></div>
<div class="t op" style="left:252.5px;top:1153.88px;line-height:20px">insight.io.api.insight.v1alpha1...</div>
<div class="t op" style="left:455.5px;top:1153.88px;line-height:20px">入口流量</div>
<div class="t op" style="left:700px;width:109.5px;text-align:right;top:1153.88px;line-height:20px">0.00 req/s</div>
<div class="t op" style="left:980px;width:98.5px;text-align:right;top:1153.88px;line-height:20px">0.00%</div>
<div class="t op" style="left:1270px;width:103.5px;text-align:right;top:1153.88px;line-height:20px">0ms</div>
<div class="a" style="left:240px;top:1253.60px;width:1244px;height:1px;background:#e8ebf0"></div>
<div class="t op" style="left:252.5px;top:1213.74px;line-height:20px">kpanda.io.api.v1alpha1.Apps/...</div>
<div class="t op" style="left:455.5px;top:1213.74px;line-height:20px">出口流量</div>
<div class="t op" style="left:700px;width:109.5px;text-align:right;top:1213.74px;line-height:20px">0.00 req/s</div>
<div class="t op" style="left:980px;width:98.5px;text-align:right;top:1213.74px;line-height:20px">0.00%</div>
<div class="t op" style="left:1270px;width:103.5px;text-align:right;top:1213.74px;line-height:20px">0ms</div>
<svg style="left:0;top:0" width="1514" height="1314"><polygon points="535,698.7 535.00,698.70 548.93,698.70 562.87,698.70 576.80,698.70 590.73,673.70 604.67,698.70 618.60,698.70 632.53,698.70 646.47,698.70 660.40,673.70 674.33,698.70 688.27,698.70 702.20,698.70 716.13,698.70 730.07,673.70 744.00,698.70 744,698.7" fill="#dce5fb"/><polyline points="535.00,698.70 548.93,698.70 562.87,698.70 576.80,698.70 590.73,673.70 604.67,698.70 618.60,698.70 632.53,698.70 646.47,698.70 660.40,673.70 674.33,698.70 688.27,698.70 702.20,698.70 716.13,698.70 730.07,673.70 744.00,698.70" fill="none" stroke="#3a7ee8" stroke-width="1.3"/><rect x="830" y="675.5" width="195" height="23.4" fill="#f9dfe1"/><path d="M830 676.0H1025" stroke="#ea8e92" stroke-width="1.6"/><path d="M830 676.0h34M991 676.0h34" stroke="#e05058" stroke-width="1.6"/><polygon points="1099,698.5 1099.00,677.50 1210.00,687.70 1322.00,674.90 1322,698.5" fill="#d8e9fa"/><polyline points="1099.00,677.50 1210.00,687.70 1322.00,674.90" fill="none" stroke="#3d9ae8" stroke-width="1.3"/><g transform="translate(1394,673.00)" fill="none" stroke="#1e3048" stroke-width="1.5" stroke-linecap="round"><path d="M8.9 9.1C10.5 7 12 5.9 13.9 5.9C16 5.9 17.2 7.8 16.8 9.8C16.5 11.5 14.5 13.5 13.3 14.8"/><path d="M12.5 10.3L10 13C8.5 14.5 8.6 17 10 18.5C11.5 20 14 19.8 15.5 18L16.6 16.8"/><circle cx="7.4" cy="10.5" r="1.9"/><circle cx="18.5" cy="15.2" r="1.9"/></g><polygon points="535,758.5600000000001 535.00,758.56 548.93,758.56 562.87,758.56 576.80,758.56 590.73,733.56 604.67,758.56 618.60,758.56 632.53,758.56 646.47,758.56 660.40,733.56 674.33,758.56 688.27,758.56 702.20,758.56 716.13,758.56 730.07,733.56 744.00,758.56 744,758.5600000000001" fill="#dce5fb"/><polyline points="535.00,758.56 548.93,758.56 562.87,758.56 576.80,758.56 590.73,733.56 604.67,758.56 618.60,758.56 632.53,758.56 646.47,758.56 660.40,733.56 674.33,758.56 688.27,758.56 702.20,758.56 716.13,758.56 730.07,733.56 744.00,758.56" fill="none" stroke="#3a7ee8" stroke-width="1.3"/><path d="M830 758.36H1032" stroke="#ef9a9e" stroke-width="1.2"/><path d="M830 758.36h17M1015 758.36h17" stroke="#e05058" stroke-width="1.4"/><polygon points="1099.0,758.46 1099.00,754.70 1113.33,754.30 1127.67,757.70 1142.00,754.30 1156.33,755.10 1170.67,734.70 1185.00,757.70 1199.33,755.30 1213.67,754.70 1228.00,755.00 1242.33,755.30 1256.67,755.00 1271.00,754.70 1285.33,755.00 1299.67,755.50 1314.00,755.70 1314.0,758.46" fill="#d8e9fa"/><polyline points="1099.00,754.70 1113.33,754.30 1127.67,757.70 1142.00,754.30 1156.33,755.10 1170.67,734.70 1185.00,757.70 1199.33,755.30 1213.67,754.70 1228.00,755.00 1242.33,755.30 1256.67,755.00 1271.00,754.70 1285.33,755.00 1299.67,755.50 1314.00,755.70" fill="none" stroke="#3d9ae8" stroke-width="1.3"/><g transform="translate(1394,732.86)" fill="none" stroke="#1e3048" stroke-width="1.5" stroke-linecap="round"><path d="M8.9 9.1C10.5 7 12 5.9 13.9 5.9C16 5.9 17.2 7.8 16.8 9.8C16.5 11.5 14.5 13.5 13.3 14.8"/><path d="M12.5 10.3L10 13C8.5 14.5 8.6 17 10 18.5C11.5 20 14 19.8 15.5 18L16.6 16.8"/><circle cx="7.4" cy="10.5" r="1.9"/><circle cx="18.5" cy="15.2" r="1.9"/></g><polygon points="535,818.4200000000001 535.00,818.42 548.93,818.42 562.87,818.42 576.80,818.42 590.73,818.42 604.67,818.42 618.60,818.42 632.53,818.42 646.47,818.42 660.40,793.42 674.33,818.42 688.27,818.42 702.20,818.42 716.13,818.42 730.07,818.42 744.00,818.42 744,818.4200000000001" fill="#dce5fb"/><polyline points="535.00,818.42 548.93,818.42 562.87,818.42 576.80,818.42 590.73,818.42 604.67,818.42 618.60,818.42 632.53,818.42 646.47,818.42 660.40,793.42 674.33,818.42 688.27,818.42 702.20,818.42 716.13,818.42 730.07,818.42 744.00,818.42" fill="none" stroke="#3a7ee8" stroke-width="1.3"/><path d="M830 818.22H1032" stroke="#ef9a9e" stroke-width="1.2"/><path d="M830 818.22h17M1015 818.22h17" stroke="#e05058" stroke-width="1.4"/><g transform="translate(1394,792.72)" fill="none" stroke="#1e3048" stroke-width="1.5" stroke-linecap="round"><path d="M8.9 9.1C10.5 7 12 5.9 13.9 5.9C16 5.9 17.2 7.8 16.8 9.8C16.5 11.5 14.5 13.5 13.3 14.8"/><path d="M12.5 10.3L10 13C8.5 14.5 8.6 17 10 18.5C11.5 20 14 19.8 15.5 18L16.6 16.8"/><circle cx="7.4" cy="10.5" r="1.9"/><circle cx="18.5" cy="15.2" r="1.9"/></g><polygon points="535,878.28 535.00,878.28 548.93,878.28 562.87,878.28 576.80,878.28 590.73,853.28 604.67,853.28 618.60,878.28 632.53,878.28 646.47,878.28 660.40,853.28 674.33,878.28 688.27,878.28 702.20,878.28 716.13,878.28 730.07,853.28 744.00,878.28 744,878.28" fill="#dce5fb"/><polyline points="535.00,878.28 548.93,878.28 562.87,878.28 576.80,878.28 590.73,853.28 604.67,853.28 618.60,878.28 632.53,878.28 646.47,878.28 660.40,853.28 674.33,878.28 688.27,878.28 702.20,878.28 716.13,878.28 730.07,853.28 744.00,878.28" fill="none" stroke="#3a7ee8" stroke-width="1.3"/><path d="M830 878.0799999999999H1032" stroke="#ef9a9e" stroke-width="1.2"/><path d="M830 878.0799999999999h17M1015 878.0799999999999h17" stroke="#e05058" stroke-width="1.4"/><polygon points="1099,878.0799999999999 1099.00,853.68 1120.10,873.18 1206.70,853.68 1313.40,873.18 1313.4,878.0799999999999" fill="#d8e9fa"/><polyline points="1099.00,853.68 1120.10,873.18 1206.70,853.68 1313.40,873.18" fill="none" stroke="#3d9ae8" stroke-width="1.3"/><g transform="translate(1394,852.58)" fill="none" stroke="#1e3048" stroke-width="1.5" stroke-linecap="round"><path d="M8.9 9.1C10.5 7 12 5.9 13.9 5.9C16 5.9 17.2 7.8 16.8 9.8C16.5 11.5 14.5 13.5 13.3 14.8"/><path d="M12.5 10.3L10 13C8.5 14.5 8.6 17 10 18.5C11.5 20 14 19.8 15.5 18L16.6 16.8"/><circle cx="7.4" cy="10.5" r="1.9"/><circle cx="18.5" cy="15.2" r="1.9"/></g><polyline points="535.00,938.14 548.93,938.14 562.87,938.14 576.80,938.14 590.73,938.14 604.67,938.14 618.60,938.14 632.53,938.14 646.47,938.14 660.40,938.14 674.33,938.14 688.27,938.14 702.20,938.14 716.13,938.14 730.07,938.14 744.00,938.14" fill="none" stroke="#3a7ee8" stroke-width="1.3"/><path d="M535 938.1400000000001h16.7M727.3 938.1400000000001h16.7" stroke="#3a7ee8" stroke-width="1.6"/><path d="M830 937.94H1032" stroke="#ef9a9e" stroke-width="1.2"/><path d="M830 937.94h17M1015 937.94h17" stroke="#e05058" stroke-width="1.4"/><path d="M1099 937.94H1340.5" stroke="#79b9ef" stroke-width="1.2"/><path d="M1099 937.94h20M1320.5 937.94h20" stroke="#3d9ae8" stroke-width="1.5"/><g transform="translate(1394,912.44)" fill="none" stroke="#1e3048" stroke-width="1.5" stroke-linecap="round"><path d="M8.9 9.1C10.5 7 12 5.9 13.9 5.9C16 5.9 17.2 7.8 16.8 9.8C16.5 11.5 14.5 13.5 13.3 14.8"/><path d="M12.5 10.3L10 13C8.5 14.5 8.6 17 10 18.5C11.5 20 14 19.8 15.5 18L16.6 16.8"/><circle cx="7.4" cy="10.5" r="1.9"/><circle cx="18.5" cy="15.2" r="1.9"/></g><polyline points="535.00,998.00 548.93,998.00 562.87,998.00 576.80,998.00 590.73,998.00 604.67,998.00 618.60,998.00 632.53,998.00 646.47,998.00 660.40,998.00 674.33,998.00 688.27,998.00 702.20,998.00 716.13,998.00 730.07,998.00 744.00,998.00" fill="none" stroke="#3a7ee8" stroke-width="1.3"/><path d="M535 998.0h16.7M727.3 998.0h16.7" stroke="#3a7ee8" stroke-width="1.6"/><path d="M830 997.8H1032" stroke="#ef9a9e" stroke-width="1.2"/><path d="M830 997.8h17M1015 997.8h17" stroke="#e05058" stroke-width="1.4"/><path d="M1099 997.8H1340.5" stroke="#79b9ef" stroke-width="1.2"/><path d="M1099 997.8h20M1320.5 997.8h20" stroke="#3d9ae8" stroke-width="1.5"/><g transform="translate(1394,972.30)" fill="none" stroke="#1e3048" stroke-width="1.5" stroke-linecap="round"><path d="M8.9 9.1C10.5 7 12 5.9 13.9 5.9C16 5.9 17.2 7.8 16.8 9.8C16.5 11.5 14.5 13.5 13.3 14.8"/><path d="M12.5 10.3L10 13C8.5 14.5 8.6 17 10 18.5C11.5 20 14 19.8 15.5 18L16.6 16.8"/><circle cx="7.4" cy="10.5" r="1.9"/><circle cx="18.5" cy="15.2" r="1.9"/></g><polyline points="535.00,1057.86 548.93,1057.86 562.87,1057.86 576.80,1057.86 590.73,1057.86 604.67,1057.86 618.60,1057.86 632.53,1057.86 646.47,1057.86 660.40,1057.86 674.33,1057.86 688.27,1057.86 702.20,1057.86 716.13,1057.86 730.07,1057.86 744.00,1057.86" fill="none" stroke="#3a7ee8" stroke-width="1.3"/><path d="M535 1057.86h16.7M727.3 1057.86h16.7" stroke="#3a7ee8" stroke-width="1.6"/><path d="M830 1057.6599999999999H1032" stroke="#ef9a9e" stroke-width="1.2"/><path d="M830 1057.6599999999999h17M1015 1057.6599999999999h17" stroke="#e05058" stroke-width="1.4"/><path d="M1099 1057.6599999999999H1340.5" stroke="#79b9ef" stroke-width="1.2"/><path d="M1099 1057.6599999999999h20M1320.5 1057.6599999999999h20" stroke="#3d9ae8" stroke-width="1.5"/><g transform="translate(1394,1032.16)" fill="none" stroke="#1e3048" stroke-width="1.5" stroke-linecap="round"><path d="M8.9 9.1C10.5 7 12 5.9 13.9 5.9C16 5.9 17.2 7.8 16.8 9.8C16.5 11.5 14.5 13.5 13.3 14.8"/><path d="M12.5 10.3L10 13C8.5 14.5 8.6 17 10 18.5C11.5 20 14 19.8 15.5 18L16.6 16.8"/><circle cx="7.4" cy="10.5" r="1.9"/><circle cx="18.5" cy="15.2" r="1.9"/></g><polyline points="535.00,1117.72 548.93,1117.72 562.87,1117.72 576.80,1117.72 590.73,1117.72 604.67,1117.72 618.60,1117.72 632.53,1117.72 646.47,1117.72 660.40,1117.72 674.33,1117.72 688.27,1117.72 702.20,1117.72 716.13,1117.72 730.07,1117.72 744.00,1117.72" fill="none" stroke="#3a7ee8" stroke-width="1.3"/><path d="M535 1117.72h16.7M727.3 1117.72h16.7" stroke="#3a7ee8" stroke-width="1.6"/><path d="M830 1117.52H1032" stroke="#ef9a9e" stroke-width="1.2"/><path d="M830 1117.52h17M1015 1117.52h17" stroke="#e05058" stroke-width="1.4"/><path d="M1099 1117.52H1340.5" stroke="#79b9ef" stroke-width="1.2"/><path d="M1099 1117.52h20M1320.5 1117.52h20" stroke="#3d9ae8" stroke-width="1.5"/><g transform="translate(1394,1092.02)" fill="none" stroke="#1e3048" stroke-width="1.5" stroke-linecap="round"><path d="M8.9 9.1C10.5 7 12 5.9 13.9 5.9C16 5.9 17.2 7.8 16.8 9.8C16.5 11.5 14.5 13.5 13.3 14.8"/><path d="M12.5 10.3L10 13C8.5 14.5 8.6 17 10 18.5C11.5 20 14 19.8 15.5 18L16.6 16.8"/><circle cx="7.4" cy="10.5" r="1.9"/><circle cx="18.5" cy="15.2" r="1.9"/></g><polyline points="535.00,1177.58 548.93,1177.58 562.87,1177.58 576.80,1177.58 590.73,1177.58 604.67,1177.58 618.60,1177.58 632.53,1177.58 646.47,1177.58 660.40,1177.58 674.33,1177.58 688.27,1177.58 702.20,1177.58 716.13,1177.58 730.07,1177.58 744.00,1177.58" fill="none" stroke="#3a7ee8" stroke-width="1.3"/><path d="M535 1177.5800000000002h16.7M727.3 1177.5800000000002h16.7" stroke="#3a7ee8" stroke-width="1.6"/><path d="M830 1177.38H1032" stroke="#ef9a9e" stroke-width="1.2"/><path d="M830 1177.38h17M1015 1177.38h17" stroke="#e05058" stroke-width="1.4"/><path d="M1099 1177.38H1340.5" stroke="#79b9ef" stroke-width="1.2"/><path d="M1099 1177.38h20M1320.5 1177.38h20" stroke="#3d9ae8" stroke-width="1.5"/><g transform="translate(1394,1151.88)" fill="none" stroke="#1e3048" stroke-width="1.5" stroke-linecap="round"><path d="M8.9 9.1C10.5 7 12 5.9 13.9 5.9C16 5.9 17.2 7.8 16.8 9.8C16.5 11.5 14.5 13.5 13.3 14.8"/><path d="M12.5 10.3L10 13C8.5 14.5 8.6 17 10 18.5C11.5 20 14 19.8 15.5 18L16.6 16.8"/><circle cx="7.4" cy="10.5" r="1.9"/><circle cx="18.5" cy="15.2" r="1.9"/></g><polyline points="535.00,1237.44 548.93,1237.44 562.87,1237.44 576.80,1237.44 590.73,1237.44 604.67,1237.44 618.60,1237.44 632.53,1237.44 646.47,1237.44 660.40,1237.44 674.33,1237.44 688.27,1237.44 702.20,1237.44 716.13,1237.44 730.07,1237.44 744.00,1237.44" fill="none" stroke="#3a7ee8" stroke-width="1.3"/><path d="M535 1237.44h16.7M727.3 1237.44h16.7" stroke="#3a7ee8" stroke-width="1.6"/><path d="M830 1237.24H1032" stroke="#ef9a9e" stroke-width="1.2"/><path d="M830 1237.24h17M1015 1237.24h17" stroke="#e05058" stroke-width="1.4"/><path d="M1099 1237.24H1340.5" stroke="#79b9ef" stroke-width="1.2"/><path d="M1099 1237.24h20M1320.5 1237.24h20" stroke="#3d9ae8" stroke-width="1.5"/><g transform="translate(1394,1211.74)" fill="none" stroke="#1e3048" stroke-width="1.5" stroke-linecap="round"><path d="M8.9 9.1C10.5 7 12 5.9 13.9 5.9C16 5.9 17.2 7.8 16.8 9.8C16.5 11.5 14.5 13.5 13.3 14.8"/><path d="M12.5 10.3L10 13C8.5 14.5 8.6 17 10 18.5C11.5 20 14 19.8 15.5 18L16.6 16.8"/><circle cx="7.4" cy="10.5" r="1.9"/><circle cx="18.5" cy="15.2" r="1.9"/></g></svg>
<div class="t" style="left:252px;top:1263.5px;font-size:13px;color:#9ba0a7;line-height:20px">共 67 项</div>
<svg style="left:1222px;top:1267px" width="12" height="14"><path d="M9 1.5l-5.5 5.5l5.5 5.5" stroke="#c4c8ce" stroke-width="1.3" fill="none"/></svg>
<div class="a" style="left:1241px;top:1261px;width:35px;height:26px;border:1px solid #d9dde3;border-radius:3px;background:#fff"></div>
<div class="t" style="left:1241px;width:32px;text-align:right;top:1263.5px;font-size:13px;color:#6b7280;line-height:20px">1</div>
<div class="t" style="left:1279.5px;top:1263.5px;font-size:13px;color:#6b7280;line-height:20px">/ 7</div>
<svg style="left:1330px;top:1267px" width="12" height="14"><path d="M3 1.5l5.5 5.5l-5.5 5.5" stroke="#5b6470" stroke-width="1.3" fill="none"/></svg>
<div class="a" style="left:1362px;top:1261px;width:110px;height:26px;border:1px solid #c9d0da;border-radius:3px;background:#fff"></div>
<div class="t" style="left:1370.5px;top:1263.5px;font-size:13px;color:#7b828d;line-height:20px">10 项</div>
<svg style="left:1453px;top:1270px" width="11" height="8"><path d="M1 1.2l4.5 4.5l4.5-4.5" stroke="#5b6470" stroke-width="1.3" fill="none"/></svg>
<div class="a" style="left:0;top:1312px;width:1514px;height:1px;background:#fff"></div>
<div class="a" style="left:0;top:1313px;width:1514px;height:1px;background:#000"></div>
</body></html>
